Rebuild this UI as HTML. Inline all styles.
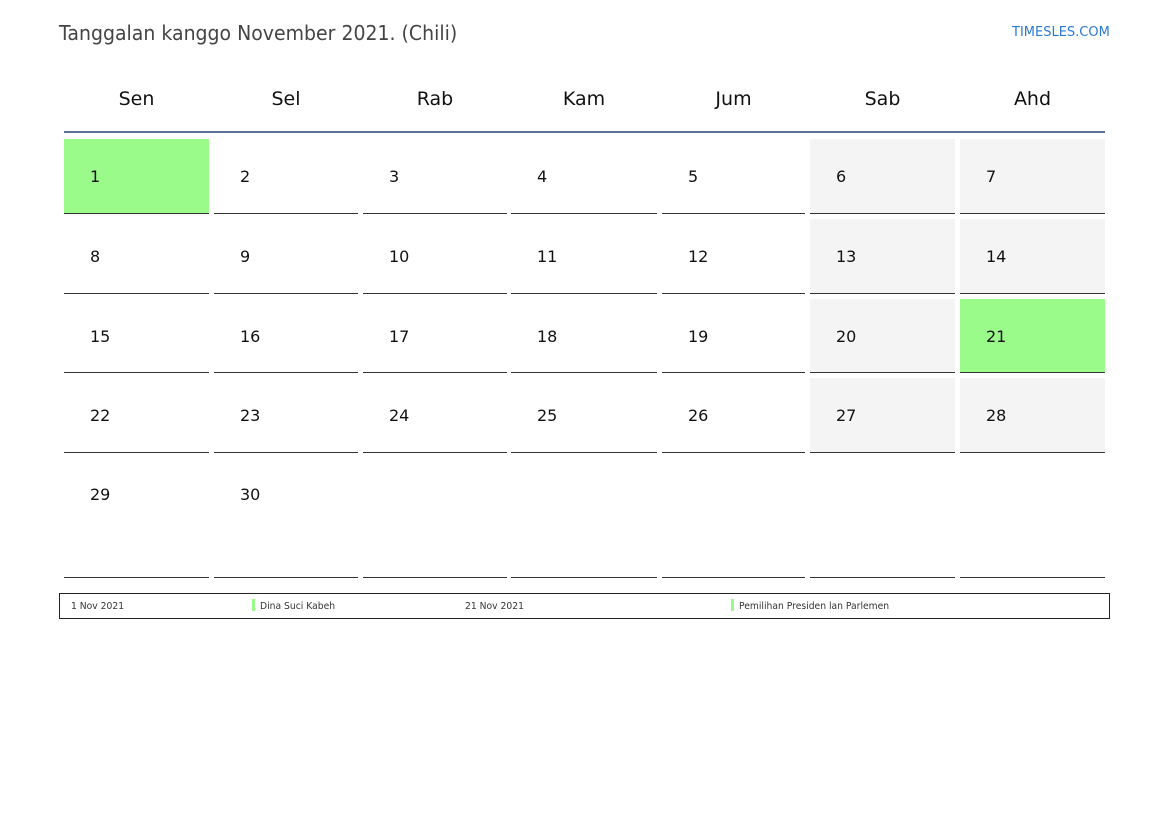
<!DOCTYPE html>
<html><head><meta charset="utf-8"><style>
body{margin:0;width:1169px;height:827px;background:#fff;font-family:"DejaVu Sans","Liberation Sans",sans-serif;position:relative;overflow:hidden}
.a{position:absolute}
.t{left:59px;top:21px;font-size:20px;color:#444;transform:scaleX(.945);transform-origin:left}
.l{left:1012px;top:25px;font-size:13px;color:#2a7ad0}
.h{font-size:19px;color:#111;width:145px;text-align:center;top:88px}
.c{border-bottom:1px solid #333;box-sizing:border-box}
.n{position:absolute;left:26px;font-size:16px;color:#111}
.f{font-size:10px;color:#333;top:601px;transform:scaleX(.92);transform-origin:left}
.g{width:3px;height:12px;background:#9afa8a;top:599px}
</style></head><body>
<div class="a t">Tanggalan kanggo November 2021. (Chili)</div>
<div class="a l">TIMESLES.COM</div>
<div id="g"></div>
<div class="a" style="left:64px;top:131px;width:1041px;height:2px;background:#5a7098"></div>
<div class="a" style="left:59px;top:593px;width:1049px;height:24px;border:1px solid #222"></div>
<div class="a f" style="left:71px">1 Nov 2021</div>
<div class="a g" style="left:252px"></div>
<div class="a f" style="left:260px">Dina Suci Kabeh</div>
<div class="a f" style="left:465px">21 Nov 2021</div>
<div class="a g" style="left:731px"></div>
<div class="a f" style="left:739px">Pemilihan Presiden lan Parlemen</div>
<script>
var xs=[64,214,363,511,662,810,960],ws=[145,144,144,146,143,145,145];
var days=["Sen","Sel","Rab","Kam","Jum","Sab","Ahd"];
var ys=[139,219,299,378,458],hs=[75,75,74,75,120];
var h="";
for(var i=0;i<7;i++)h+='<div class="a h" style="left:'+xs[i]+'px;width:'+ws[i]+'px">'+days[i]+'</div>';
for(var r=0;r<5;r++)for(var c=0;c<7;c++){
 var d=r*7+c+1,bg="#fff";
 if(c>=5&&r<4)bg="#f4f4f4";
 if(d==1||d==21)bg="#9afa8a";
 var txt=d<=30?'<span class="n" style="top:'+(r==4?27:28)+'px">'+d+'</span>':'';
 h+='<div class="a c" style="left:'+xs[c]+'px;top:'+ys[r]+'px;width:'+ws[c]+'px;height:'+hs[r]+'px;background:'+bg+'">'+txt+'</div>';
}
document.getElementById("g").innerHTML=h;
</script>
</body></html>
